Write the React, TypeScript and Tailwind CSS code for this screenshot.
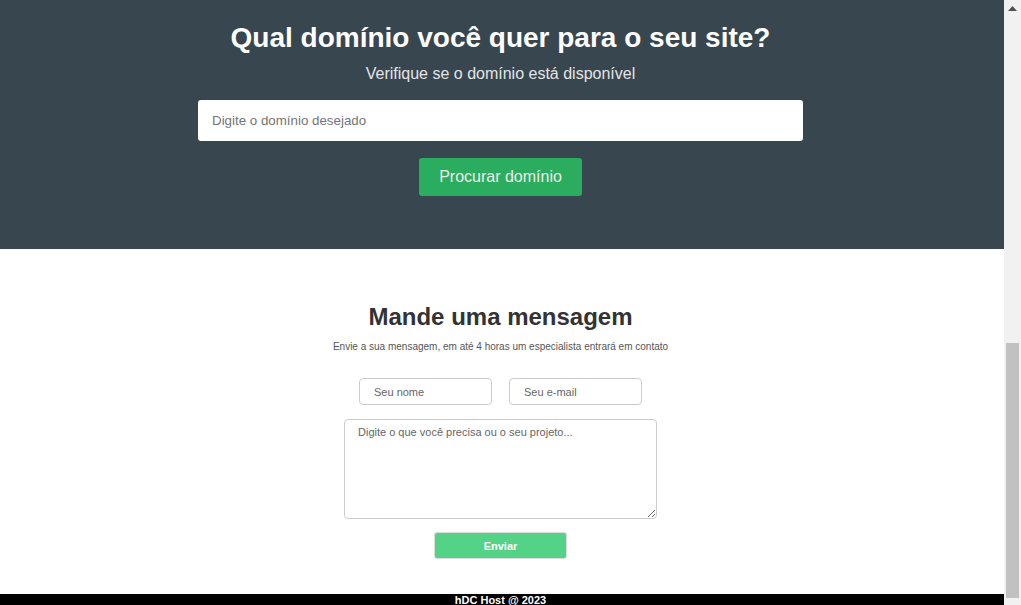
const FONT = { fontFamily: '"Liberation Sans", Arial, sans-serif' };

function Scrollbar() {
  return (
    <div className="flex w-[17px] shrink-0 flex-col bg-[#f1f1f1]">
      <div className="flex h-[17px] items-center justify-center">
        <svg width="9" height="5" viewBox="0 0 9 5" aria-hidden>
          <path d="M0 5 L4.5 0 L9 5 Z" fill="#505050" />
        </svg>
      </div>
      <div className="flex-1" />
      <div className="mx-[2px] mb-[7px] h-[255px] bg-[#c1c1c1]" />
    </div>
  );
}

function DomainSearch() {
  return (
    <section className="flex flex-col items-center bg-[#37464f] pt-[22px] pb-[53px] pr-[3px]">
      <h1 className="text-[28px] font-bold leading-[32px] text-white">
        Qual domínio você quer para o seu site?
      </h1>
      <p className="mt-[10px] text-[16px] leading-[20px] text-[#e4e4e4]">
        Verifique se o domínio está disponível
      </p>
      <input
        type="text"
        placeholder="Digite o domínio desejado"
        className="mt-[16px] h-[41px] w-[605px] rounded-[3px] bg-white px-[14px] text-[13.33px] text-[#333] outline-none placeholder:text-[#757575]"
        style={FONT}
      />
      <button
        className="mt-[17px] h-[38px] w-[163px] rounded-[3px] bg-[#2bad60] text-[16px] text-[#ececec]"
        style={FONT}
      >
        Procurar domínio
      </button>
    </section>
  );
}

function Contact() {
  return (
    <section className="flex flex-col items-center bg-white pt-[54px] pb-[35px] pr-[3px]">
      <h2 className="text-[24px] font-bold leading-[28px] text-[#333]">Mande uma mensagem</h2>
      <p className="mt-[10px] text-[10px] leading-[12px] text-[#555]">
        Envie a sua mensagem, em até 4 horas um especialista entrará em contato
      </p>
      <div className="mt-[25px] flex gap-[17px]">
        <input
          type="text"
          placeholder="Seu nome"
          className="h-[27px] w-[133px] rounded-[4px] border border-[#ccc] px-[14px] text-[11px] outline-none placeholder:text-[#666]"
          style={FONT}
        />
        <input
          type="email"
          placeholder="Seu e-mail"
          className="h-[27px] w-[133px] rounded-[4px] border border-[#ccc] px-[14px] text-[11px] outline-none placeholder:text-[#666]"
          style={FONT}
        />
      </div>
      <textarea
        placeholder="Digite o que você precisa ou o seu projeto..."
        className="mt-[14px] h-[100px] w-[313px] rounded-[4px] border border-[#ccc] px-[13px] py-[4px] text-[11px] outline-none placeholder:text-[#666]"
        style={FONT}
      />
      <button
        className="mt-[13px] h-[27px] w-[133px] rounded-[3px] border border-[#dcdcdc] bg-[#54d387] pt-[1px] text-[11px] font-bold text-white"
        style={FONT}
      >
        Enviar
      </button>
    </section>
  );
}

export default function App() {
  return (
    <div className="flex h-[605px] w-full overflow-hidden" style={FONT}>
      <div className="flex min-w-0 flex-1 flex-col">
        <DomainSearch />
        <Contact />
        <footer className="flex-1 bg-black pr-[3px] text-center text-[11px] font-bold leading-[13px] text-white">
          hDC Host @ 2023
        </footer>
      </div>
      <Scrollbar />
    </div>
  );
}
